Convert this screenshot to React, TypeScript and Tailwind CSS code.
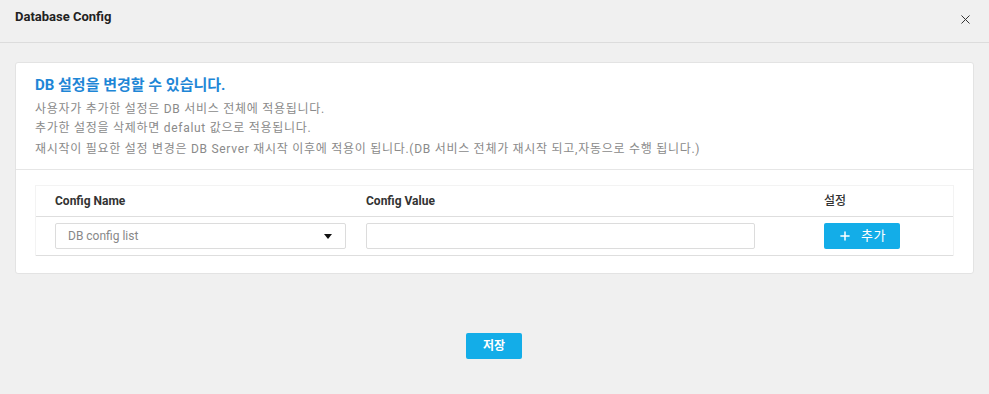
import { X, Plus } from "lucide-react";

const font = { fontFamily: 'Roboto, "Noto Sans CJK KR", sans-serif' };

export default function App() {
  return (
    <div className="w-[989px] h-[394px] bg-[#f0f0f0] flex flex-col" style={font}>
      <div className="h-[43px] flex items-center justify-between pl-[15px] pr-[16px] border-b border-[#dcdcdc]">
        <h1 className="text-[13px] font-bold text-[#222] pb-[8px]">Database Config</h1>
        <button className="text-[#333] pb-[4px]">
          <X className="w-[15px] h-[15px]" strokeWidth={1.6} />
        </button>
      </div>

      <div className="mx-[15px] mt-[19px] w-[959px] h-[212px] bg-white border border-[#e3e3e3] rounded-[3px] flex flex-col">
        <div className="pl-[19px] pt-[12px] h-[107px] border-b border-[#e6e6e6]">
          <h2 className="text-[15px] font-bold text-[#1e86d6] leading-[20px]">DB 설정을 변경할 수 있습니다.</h2>
          <p className="text-[12px] text-[#8a8a8a] leading-[19px] mt-[5px] tracking-[0.06em]">사용자가 추가한 설정은 DB 서비스 전체에 적용됩니다.</p>
          <p className="text-[12px] text-[#8a8a8a] leading-[19px] tracking-[0.06em]">추가한 설정을 삭제하면 defalut 값으로 적용됩니다.</p>
          <p className="text-[12px] text-[#8a8a8a] leading-[19px] mt-[2px] tracking-[0.06em]">
            재시작이 필요한 설정 변경은 DB Server 재시작 이후에 적용이 됩니다.(DB 서비스 전체가 재시작 되고,자동으로 수행 됩니다.)
          </p>
        </div>

        <div className="mx-[19px] mt-[15px] border-t border-x border-[#f3f3f3]">
          <div className="grid grid-cols-[310px_459px_148px] h-[31px] items-center border-b border-[#dedede] text-[12px] font-bold text-[#333]">
            <div className="pl-[19px]">Config Name</div>
            <div className="pl-[20px]">Config Value</div>
            <div className="pl-[19px] font-medium">설정</div>
          </div>
          <div className="grid grid-cols-[310px_459px_148px] h-[39px] items-center border-b border-[#dedede]">
            <div className="pl-[19px]">
              <div className="w-[291px] h-[26px] border border-[#dcdcdc] rounded-[2px] flex items-center justify-between pl-[12px] pr-[13px]">
                <span className="text-[12px] text-[#888]">DB config list</span>
                <span className="w-0 h-0 border-l-[4px] border-r-[4px] border-t-[5px] border-l-transparent border-r-transparent border-t-[#111]" />
              </div>
            </div>
            <div className="pl-[20px]">
              <input className="w-[389px] h-[26px] border border-[#dcdcdc] rounded-[2px] outline-none px-2 text-[12px]" />
            </div>
            <div className="pl-[19px]">
              <button className="w-[76px] h-[26px] bg-[#13ade8] rounded-[2px] text-white text-[13px] flex items-center justify-center gap-[9px]">
                <Plus className="w-[14px] h-[14px]" strokeWidth={2.6} />
                <span className="tracking-[0.05em]">추가</span>
              </button>
            </div>
          </div>
        </div>
      </div>

      <div className="flex justify-center mt-[59px] pr-[1px]">
        <button className="w-[56px] h-[26px] bg-[#13ade8] rounded-[2px] text-white text-[12px] font-bold">저장</button>
      </div>
    </div>
  );
}
